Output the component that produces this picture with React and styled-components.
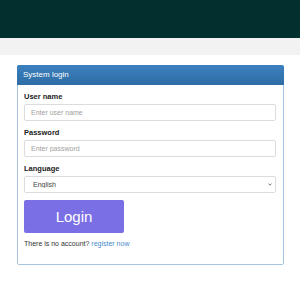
import styled, { createGlobalStyle } from 'styled-components';

const GlobalStyle = createGlobalStyle`
  html, body {
    margin: 0;
    padding: 0;
    background: #fff;
    font-family: "Liberation Sans", Arial, sans-serif;
  }
`;

const TopBar = styled.div`
  height: 38px;
  background: #01302f;
`;

const SubBar = styled.div`
  height: 17px;
  background: #f2f2f2;
`;

const Panel = styled.div`
  margin: 10px 0 0 17px;
  width: 267px;
  box-sizing: border-box;
  border: 1px solid #a7c3de;
  border-radius: 2px;
  background: #fff;
`;

const PanelHeading = styled.div`
  height: 20px;
  background: linear-gradient(#3c80bf, #2e6da4);
  color: #fff;
  font-size: 8px;
  line-height: 20px;
  padding-left: 6px;
  margin: -1px -1px 0;
  border-radius: 2px 2px 0 0;
`;

const PanelBody = styled.div`
  padding: 7px 7px 15px 6px;
`;

const Group = styled.div`
  margin-bottom: 7px;
`;

const Label = styled.label`
  display: block;
  font-size: 7.5px;
  font-weight: bold;
  color: #222;
  line-height: 10px;
  margin-bottom: 2px;
`;

const Input = styled.input`
  display: block;
  width: 100%;
  height: 17px;
  box-sizing: border-box;
  border: 1px solid #dcdcdc;
  border-radius: 2px;
  padding: 0 6px;
  font-family: inherit;
  font-size: 7px;
  color: #555;
  outline: none;
  &::placeholder {
    color: #a0a0a0;
  }
`;

const SelectWrap = styled.div`
  position: relative;
`;

const Select = styled.select`
  display: block;
  width: 100%;
  height: 17px;
  box-sizing: border-box;
  border: 1px solid #dcdcdc;
  border-radius: 2px;
  padding: 0 8px;
  font-family: inherit;
  font-size: 7px;
  color: #444;
  background: #fff;
  appearance: none;
  outline: none;
`;

const Chevron = styled.svg`
  position: absolute;
  right: 4px;
  top: 7px;
  width: 4px;
  height: 3px;
  pointer-events: none;
`;

const LoginButton = styled.button`
  display: block;
  width: 100px;
  height: 33px;
  border: none;
  border-radius: 2px;
  background: #7b6fe5;
  color: #fff;
  font-family: inherit;
  font-size: 15px;
  cursor: pointer;
`;

const Note = styled.p`
  margin: 6px 0 0;
  font-size: 7px;
  line-height: 10px;
  color: #333;
  a {
    color: #4a8bc9;
    text-decoration: none;
  }
`;

export default function App() {
  return (
    <>
      <GlobalStyle />
      <TopBar />
      <SubBar />
      <Panel>
        <PanelHeading>System login</PanelHeading>
        <PanelBody>
          <Group>
            <Label>User name</Label>
            <Input placeholder="Enter user name" />
          </Group>
          <Group>
            <Label>Password</Label>
            <Input type="password" placeholder="Enter password" />
          </Group>
          <Group>
            <Label>Language</Label>
            <SelectWrap>
              <Select defaultValue="en">
                <option value="en">English</option>
              </Select>
              <Chevron viewBox="0 0 10 8">
                <path d="M1 1.5 L5 6 L9 1.5" fill="none" stroke="#555" strokeWidth="2" />
              </Chevron>
            </SelectWrap>
          </Group>
          <LoginButton>Login</LoginButton>
          <Note>
            There is no account? <a href="#">register now</a>
          </Note>
        </PanelBody>
      </Panel>
    </>
  );
}
